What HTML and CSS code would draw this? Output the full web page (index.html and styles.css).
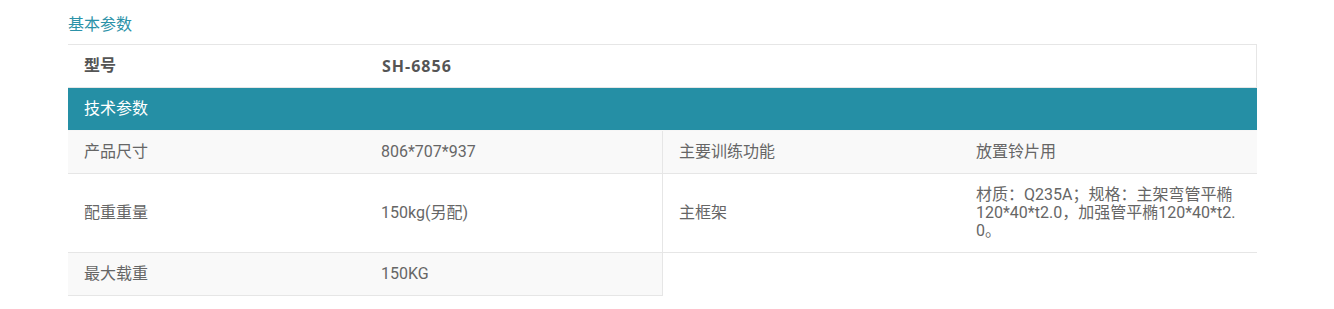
FILE: index.html
```html
<!DOCTYPE html>
<html lang="zh-CN">
<head>
<meta charset="utf-8">
<title>基本参数</title>
<link rel="stylesheet" href="styles.css">
</head>
<body>
<section class="spec">
  <h2 class="spec-title">基本参数</h2>
  <div class="spec-table">
    <div class="model-row">
      <span class="cell label">型号</span>
      <span class="cell value">SH-6856</span>
    </div>
    <div class="group-head">技术参数</div>
    <div class="spec-grid">
      <div class="item shade side">
        <span class="cell label">产品尺寸</span>
        <span class="cell value">806*707*937</span>
      </div>
      <div class="item shade">
        <span class="cell label">主要训练功能</span>
        <span class="cell value">放置铃片用</span>
      </div>
      <div class="item side">
        <span class="cell label">配重重量</span>
        <span class="cell value">150kg(另配)</span>
      </div>
      <div class="item">
        <span class="cell label">主框架</span>
        <span class="cell value">材质：Q235A；规格：主架弯管平椭120*40*t2.0，加强管平椭120*40*t2.0。</span>
      </div>
      <div class="item shade side">
        <span class="cell label">最大载重</span>
        <span class="cell value">150KG</span>
      </div>
    </div>
  </div>
</section>
</body>
</html>
```

FILE: styles.css
```css
* {
  box-sizing: border-box;
}

body {
  margin: 0;
  background: #fff;
  font-family: Roboto, "Noto Sans CJK SC", sans-serif;
  font-size: 16px;
  color: #666;
}

.spec {
  width: 1189px;
  margin-left: 68px;
  padding-top: 14px;
}

.spec-title {
  margin: 0 0 8px;
  font-size: 16px;
  line-height: 22px;
  font-weight: normal;
  color: #2b92a8;
}

.spec-table {
  display: flex;
  flex-direction: column;
}

.model-row {
  display: grid;
  grid-template-columns: 298px 1fr;
  border-top: 1px solid #e6e6e6;
  border-right: 1px solid #e6e6e6;
  border-bottom: 1px solid #e6e6e6;
  font-weight: bold;
  color: #555;
}

.model-row .value {
  font-family: "Open Sans", "Noto Sans CJK SC", sans-serif;
  letter-spacing: 1px;
}

.cell {
  padding: 12px 16px;
  line-height: 18px;
}

.group-head {
  padding: 12px 16px;
  line-height: 18px;
  background: #258fa5;
  color: #fff;
}

.spec-grid {
  display: grid;
  grid-template-columns: 595px 594px;
  border-top: 1px solid #f6f6f6;
}

.item {
  display: grid;
  grid-template-columns: 297px 1fr;
  align-items: center;
  border-bottom: 1px solid #e6e6e6;
  background: #fff;
}

.item.shade {
  background: #f9f9f9;
}

.item.side {
  border-right: 1px solid #e6e6e6;
}

.item .value {
  padding-right: 20px;
  word-break: break-all;
}
```
